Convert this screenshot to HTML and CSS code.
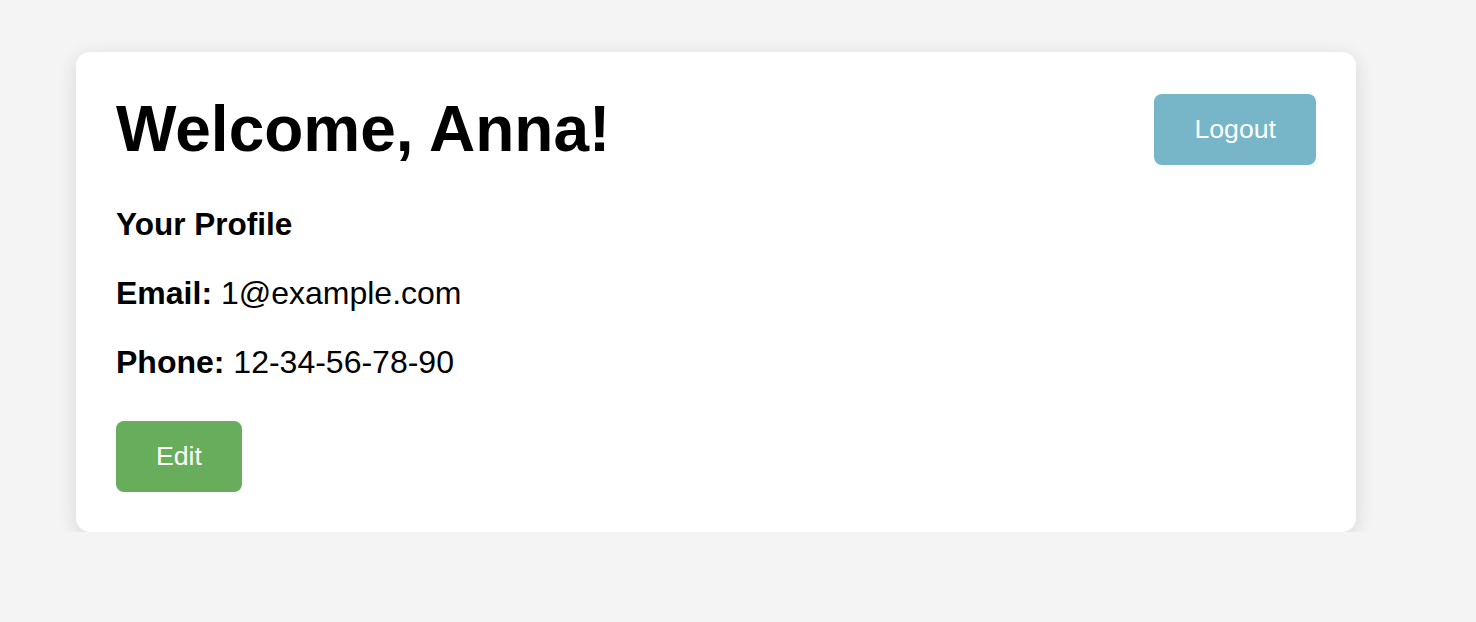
FILE: index.html
```html
<!DOCTYPE html>
<html lang="en">
<head>
<meta charset="utf-8">
<title>Profile</title>
<link rel="stylesheet" href="styles.css">
</head>
<body>
<div class="page">
  <div class="card">
    <div class="header">
      <h1 class="title">Welcome, Anna!</h1>
      <button class="btn btn-logout">Logout</button>
    </div>
    <h3 class="section">Your Profile</h3>
    <p class="field"><strong>Email:</strong> 1@example.com</p>
    <p class="field"><strong>Phone:</strong> 12-34-56-78-90</p>
    <button class="btn btn-edit">Edit</button>
  </div>
</div>
</body>
</html>
```
FILE: styles.css
```css
html, body {
  margin: 0;
  padding: 0;
  background: #f4f4f4;
  font-family: "Liberation Sans", Arial, Helvetica, sans-serif;
  color: #000;
}
.page {
  padding: 52px 0 0 76px;
}
.card {
  box-sizing: border-box;
  width: 1280px;
  background: #fff;
  border-radius: 14px;
  padding: 40px;
  box-shadow: 0 5px 20px rgba(0, 0, 0, 0.12);
}
.header {
  display: flex;
  justify-content: space-between;
  align-items: center;
  margin-bottom: 40px;
}
.title {
  margin: 0;
  font-size: 64px;
  font-weight: bold;
  line-height: normal;
}
.section {
  margin: 0 0 32px;
  font-size: 31.5px;
  font-weight: bold;
  line-height: normal;
}
.field {
  margin: 0 0 32px;
  font-size: 32px;
  line-height: normal;
}
.btn {
  font-family: "Liberation Sans", Arial, Helvetica, sans-serif;
  font-size: 26.67px;
  line-height: normal;
  color: #fff;
  border: none;
  border-radius: 8px;
  padding: 20px 40px;
  cursor: pointer;
}
.btn-logout {
  background: #77b5c9;
}
.btn-edit {
  background: #68ad5c;
  margin-top: 40px;
  display: block;
}
```
